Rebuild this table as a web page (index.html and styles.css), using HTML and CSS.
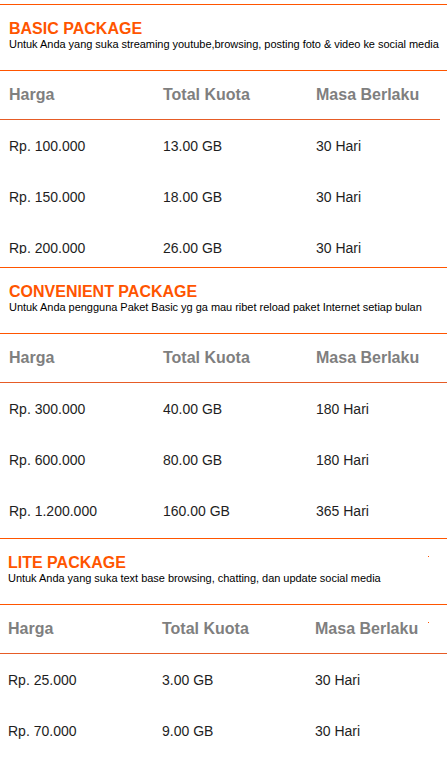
FILE: index.html
```html
<!DOCTYPE html>
<html>
<head>
<meta charset="utf-8">
<link rel="stylesheet" href="styles.css">
</head>
<body>
<div class="page">
  <section class="pkg pkg--basic">
    <div class="pkg-head">
      <h2 class="pkg-title">BASIC PACKAGE</h2>
      <p class="pkg-desc">Untuk Anda yang suka streaming youtube,browsing, posting foto &amp; video ke social media</p>
    </div>
    <div class="tbl">
      <div class="tr th"><span>Harga</span><span>Total Kuota</span><span>Masa Berlaku</span></div>
      <div class="tr"><span>Rp. 100.000</span><span>13.00 GB</span><span>30 Hari</span></div>
      <div class="tr"><span>Rp. 150.000</span><span>18.00 GB</span><span>30 Hari</span></div>
      <div class="tr"><span>Rp. 200.000</span><span>26.00 GB</span><span>30 Hari</span></div>
    </div>
  </section>
  <section class="pkg">
    <div class="pkg-head">
      <h2 class="pkg-title">CONVENIENT PACKAGE</h2>
      <p class="pkg-desc">Untuk Anda pengguna Paket Basic yg ga mau ribet reload paket Internet setiap bulan</p>
    </div>
    <div class="tbl">
      <div class="tr th"><span>Harga</span><span>Total Kuota</span><span>Masa Berlaku</span></div>
      <div class="tr"><span>Rp. 300.000</span><span>40.00 GB</span><span>180 Hari</span></div>
      <div class="tr"><span>Rp. 600.000</span><span>80.00 GB</span><span>180 Hari</span></div>
      <div class="tr"><span>Rp. 1.200.000</span><span>160.00 GB</span><span>365 Hari</span></div>
    </div>
  </section>
  <section class="pkg pkg--lite">
    <span class="dot dot-1"></span>
    <span class="dot dot-2"></span>
    <div class="pkg-head">
      <h2 class="pkg-title">LITE PACKAGE</h2>
      <p class="pkg-desc">Untuk Anda yang suka text base browsing, chatting, dan update social media</p>
    </div>
    <div class="tbl">
      <div class="tr th"><span>Harga</span><span>Total Kuota</span><span>Masa Berlaku</span></div>
      <div class="tr"><span>Rp. 25.000</span><span>3.00 GB</span><span>30 Hari</span></div>
      <div class="tr"><span>Rp. 70.000</span><span>9.00 GB</span><span>30 Hari</span></div>
    </div>
  </section>
</div>
</body>
</html>
```

FILE: styles.css
```css
html, body {
  margin: 0;
  padding: 0;
  background: #ffffff;
}
body {
  font-family: "Liberation Sans", Arial, sans-serif;
  color: #1e1e1e;
  overflow: hidden;
}
.page {
  padding-top: 4px;
  width: 447px;
}
.pkg {
  position: relative;
  border-top: 1px solid #ff5500;
  padding-bottom: 2px;
}
.pkg--basic {
  height: 262px;
  padding-bottom: 0;
  overflow: hidden;
}
.pkg--basic .tbl {
  height: 183px;
  overflow: hidden;
}
.pkg-head {
  height: 66px;
  box-sizing: border-box;
  padding: 15px 0 0 9px;
  border-bottom: 1px solid #ff5500;
}
.pkg-title {
  margin: 0;
  font-size: 16px;
  line-height: 18px;
  font-weight: bold;
  color: #ff5500;
}
.pkg-desc {
  margin: 0;
  font-size: 11px;
  line-height: 13px;
  letter-spacing: -0.03px;
  color: #000000;
  white-space: nowrap;
}
.tbl {
  display: flex;
  flex-direction: column;
}
.tr {
  display: grid;
  grid-template-columns: 154px 153px 1fr;
  height: 51px;
  flex-shrink: 0;
  align-items: center;
  font-size: 14px;
}
.tr span {
  padding-left: 9px;
  white-space: nowrap;
}
.th {
  height: 48px;
  font-size: 16px;
  font-weight: bold;
  color: #7f7f7f;
  border-bottom: 1px solid #e65c26;
}
.pkg--basic .th {
  width: 440px;
}
.pkg--lite .pkg-head {
  padding-left: 8px;
}
.pkg--lite .tr span {
  padding-left: 8px;
}
.dot {
  position: absolute;
  left: 428px;
  width: 1px;
  height: 1px;
  background: #ff5500;
}
.dot-1 { top: 17px; }
.dot-2 { top: 83px; }
```
